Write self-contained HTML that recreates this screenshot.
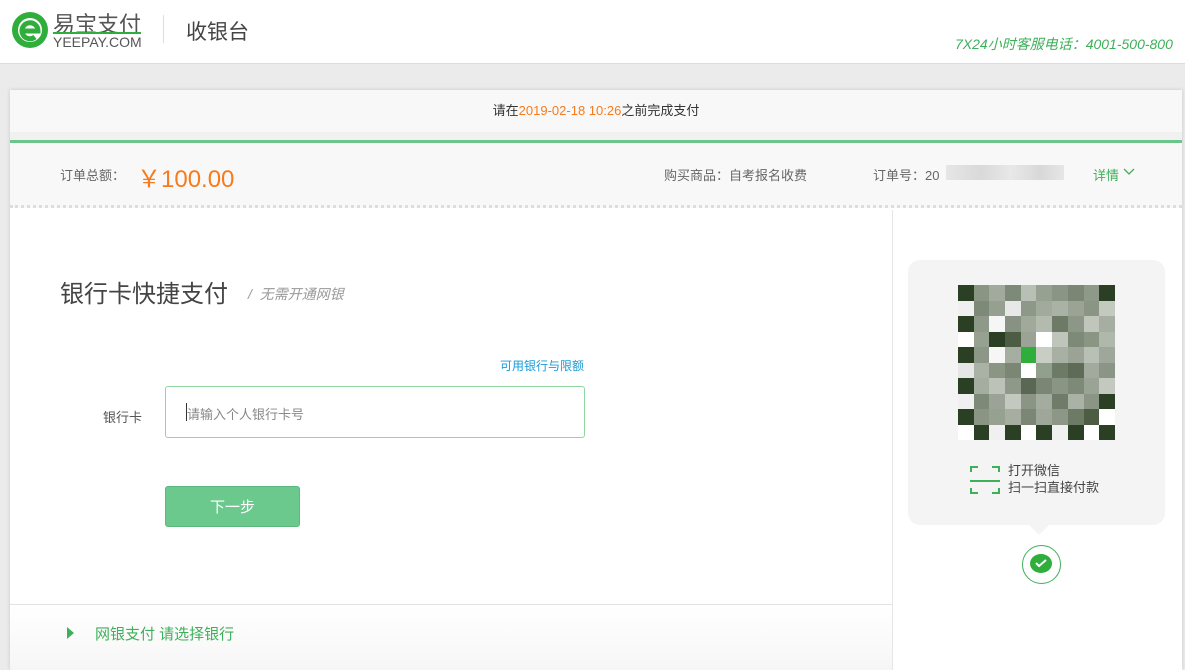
<!DOCTYPE html>
<html><head><meta charset="utf-8"><style>
*{margin:0;padding:0;box-sizing:border-box}
body{width:1185px;height:661px;overflow:hidden;background:#ebebeb;font-family:"Liberation Sans","Noto Sans CJK SC",sans-serif;position:relative;color:#333}
.hdr{position:absolute;left:0;top:0;width:1185px;height:64px;background:#fff;border-bottom:1px solid #dcdcdc}
.abs{position:absolute}
.card{position:absolute;left:10px;top:90px;width:1172px;height:580px;background:#fff;box-shadow:0 0 4px rgba(0,0,0,.15)}
.q{display:grid;grid-template-columns:repeat(10,1fr);position:absolute;left:958px;top:285px;width:157px;height:155px;background:#2b3f24}
</style></head><body>
<div class="hdr">
 <svg class="abs" style="left:10px;top:10px" width="44" height="40" viewBox="0 0 44 40"><circle cx="20" cy="20" r="18" fill="#2fae3b"/><circle cx="20" cy="20" r="12" fill="#fff"/><path d="M11 21 h17 a8 8 0 1 0 -3 6" stroke="#2fae3b" stroke-width="5" fill="none"/></svg>
 <div class="abs" style="left:53px;top:7px;font-size:22px;color:#555">易宝支付</div>
 <div class="abs" style="left:53px;top:32px;width:88px;height:2px;background:#2fae3b"></div>
 <div class="abs" style="left:53px;top:34px;font-size:14px;color:#555">YEEPAY.COM</div>
 <div class="abs" style="left:163px;top:15px;width:1px;height:28px;background:#ddd"></div>
 <div class="abs" style="left:186px;top:16px;font-size:21px;color:#444">收银台</div>
 <div class="abs" style="left:955px;top:34px;font-size:14px;color:#3eb05a;font-style:italic">7X24小时客服电话：4001-500-800</div>
</div>
<div class="card">
 <div class="abs" style="left:0;top:0;width:1172px;height:42px;background:#f8f8f8;text-align:center;line-height:42px;font-size:13px">请在<span style="color:#f77b1c">2019-02-18 10:26</span>之前完成支付</div>
 <div class="abs" style="left:0;top:42px;width:1172px;height:8px;background:#f1f1f1"></div>
 <div class="abs" style="left:0;top:50px;width:1172px;height:3px;background:#6cc68c"></div>
 <div class="abs" style="left:0;top:53px;width:1172px;height:65px;background:#f8f8f8;border-bottom:3px dotted #ddd"></div>
 <div class="abs" style="left:50px;top:75px;font-size:13px;color:#666">订单总额：</div>
 <div class="abs" style="left:127px;top:69px;font-size:24px;color:#f77b1c">￥100.00</div>
 <div class="abs" style="left:654px;top:75px;font-size:13px;color:#666">购买商品：自考报名收费</div>
 <div class="abs" style="left:863px;top:75px;font-size:13px;color:#666">订单号：20</div>
 <div class="abs" style="left:936px;top:75px;width:118px;height:15px;background:linear-gradient(90deg,#e6e6e6,#d9d9d9 30%,#e8e8e8 55%,#d8d8d8 80%,#e6e6e6)"></div>
 <div class="abs" style="left:1083px;top:75px;font-size:13px;color:#3eb05a">详情</div>
 <svg class="abs" style="left:1113px;top:78px" width="12" height="8"><path d="M1 1 l5 5 l5 -5" stroke="#3eb05a" stroke-width="1.3" fill="none"/></svg>
 <div class="abs" style="left:882px;top:120px;width:1px;height:460px;background:#e6e6e6"></div>
 <div class="abs" style="left:50px;top:184px;font-size:24px;color:#444">银行卡快捷支付</div>
 <div class="abs" style="left:238px;top:194px;font-size:14px;color:#999;font-style:italic">/&nbsp; 无需开通网银</div>
 <div class="abs" style="left:490px;top:267px;font-size:12px;color:#1a9bd7">可用银行与限额</div>
 <div class="abs" style="left:93px;top:317px;font-size:13px;color:#555">银行卡</div>
 <div class="abs" style="left:155px;top:296px;width:420px;height:52px;border:1px solid #8fd6a2;border-radius:3px"></div>
 <div class="abs" style="left:176px;top:313px;width:1px;height:18px;background:#333"></div>
 <div class="abs" style="left:177px;top:314px;font-size:13px;color:#888">请输入个人银行卡号</div>
 <div class="abs" style="left:155px;top:396px;width:135px;height:41px;background:#6cc98e;border:1px solid #5cb87e;border-radius:3px;color:#fff;text-align:center;line-height:42px;font-size:15px">下一步</div>
 <div class="abs" style="left:0;top:514px;width:882px;height:66px;border-top:1px solid #e2e2e2;background:linear-gradient(#fff,#f6f6f6)"></div>
 <div class="abs" style="left:57px;top:537px;width:0;height:0;border-left:7px solid #3eb05a;border-top:6px solid transparent;border-bottom:6px solid transparent"></div>
 <div class="abs" style="left:85px;top:533px;font-size:15px;color:#3eb05a">网银支付 请选择银行</div>
 <div class="abs" style="left:898px;top:170px;width:257px;height:265px;background:#f4f4f4;border-radius:12px"></div>
 <div class="abs" style="left:1019px;top:435px;width:0;height:0;border-top:10px solid #f4f4f4;border-left:10px solid transparent;border-right:10px solid transparent"></div>
 <div class="abs" style="left:960px;top:376px;width:30px;height:30px">
  <div class="abs" style="left:0;top:0;width:8px;height:6px;border-left:2px solid #3eb05a;border-top:2px solid #3eb05a"></div>
  <div class="abs" style="left:22px;top:0;width:8px;height:6px;border-right:2px solid #3eb05a;border-top:2px solid #3eb05a"></div>
  <div class="abs" style="left:0;top:14px;width:30px;height:2px;background:#3eb05a"></div>
  <div class="abs" style="left:0;top:22px;width:8px;height:6px;border-left:2px solid #3eb05a;border-bottom:2px solid #3eb05a"></div>
  <div class="abs" style="left:22px;top:22px;width:8px;height:6px;border-right:2px solid #3eb05a;border-bottom:2px solid #3eb05a"></div>
 </div>
 <div class="abs" style="left:998px;top:372px;font-size:13px;color:#444;line-height:17px">打开微信<br>扫一扫直接付款</div>
 <div class="abs" style="left:1012px;top:455px;width:39px;height:39px;border:1px solid #3eb05a;border-radius:50%;background:#fff"></div>
 <div class="abs" style="left:1020px;top:464px;width:22px;height:19px;background:#2fae3b;border-radius:50%"></div>
 <svg class="abs" style="left:1024px;top:467px" width="14" height="12"><path d="M2 6 l3 3 l7 -6" stroke="#fff" stroke-width="2" fill="none"/></svg>
</div>
<div class="q">
<div style="background:#2b3f24"></div><div style="background:#8a9584"></div><div style="background:#a1aa9c"></div><div style="background:#7e8a78"></div><div style="background:#b8bfb4"></div><div style="background:#97a192"></div><div style="background:#8b9586"></div><div style="background:#7b8675"></div><div style="background:#8f998a"></div><div style="background:#2b3f24"></div>
<div style="background:#f0f0f0"></div><div style="background:#7e8a78"></div><div style="background:#96a090"></div><div style="background:#e8e8e8"></div><div style="background:#8e9889"></div><div style="background:#a1aa9c"></div><div style="background:#aab2a5"></div><div style="background:#9aa396"></div><div style="background:#8a9584"></div><div style="background:#c4c9c0"></div>
<div style="background:#2b3f24"></div><div style="background:#8f998a"></div><div style="background:#f6f6f6"></div><div style="background:#889282"></div><div style="background:#a0a99b"></div><div style="background:#b3bbaf"></div><div style="background:#6d7a66"></div><div style="background:#8d9788"></div><div style="background:#c0c6bc"></div><div style="background:#a6aea1"></div>
<div style="background:#fff"></div><div style="background:#97a192"></div><div style="background:#2b3f24"></div><div style="background:#4d5d44"></div><div style="background:#9aa396"></div><div style="background:#fff"></div><div style="background:#bfc5bb"></div><div style="background:#7e8a78"></div><div style="background:#8a9584"></div><div style="background:#b0b8ac"></div>
<div style="background:#2b3f24"></div><div style="background:#8d9788"></div><div style="background:#f6f6f6"></div><div style="background:#a6aea1"></div><div style="background:#2fae3b"></div><div style="background:#c9cec5"></div><div style="background:#a8b0a3"></div><div style="background:#9aa396"></div><div style="background:#b8bfb4"></div><div style="background:#9ea79a"></div>
<div style="background:#e6e6e6"></div><div style="background:#aab2a5"></div><div style="background:#8a9584"></div><div style="background:#7b8675"></div><div style="background:#fff"></div><div style="background:#91a08c"></div><div style="background:#6d7a66"></div><div style="background:#5e6c57"></div><div style="background:#a1aa9c"></div><div style="background:#8b9586"></div>
<div style="background:#2b3f24"></div><div style="background:#a5ada0"></div><div style="background:#bcc2b8"></div><div style="background:#8f998a"></div><div style="background:#5a6853"></div><div style="background:#7b8675"></div><div style="background:#8a9584"></div><div style="background:#7e8a78"></div><div style="background:#9aa396"></div><div style="background:#c4c9c0"></div>
<div style="background:#f0f0f0"></div><div style="background:#7e8a78"></div><div style="background:#9aa396"></div><div style="background:#c4c9c0"></div><div style="background:#8b9586"></div><div style="background:#a4ac9f"></div><div style="background:#6f7c68"></div><div style="background:#aab2a5"></div><div style="background:#8b9586"></div><div style="background:#2b3f24"></div>
<div style="background:#2b3f24"></div><div style="background:#8a9584"></div><div style="background:#97a192"></div><div style="background:#a6aea1"></div><div style="background:#7b8675"></div><div style="background:#9ea79a"></div><div style="background:#8d9788"></div><div style="background:#6d7a66"></div><div style="background:#4d5d44"></div><div style="background:#fff"></div>
<div style="background:#fff"></div><div style="background:#2b3f24"></div><div style="background:#f0f0f0"></div><div style="background:#2b3f24"></div><div style="background:#fff"></div><div style="background:#2b3f24"></div><div style="background:#f0f0f0"></div><div style="background:#2b3f24"></div><div style="background:#fff"></div><div style="background:#2b3f24"></div>
</div>
</body></html>
